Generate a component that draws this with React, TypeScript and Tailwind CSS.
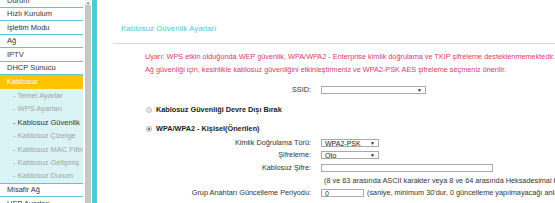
import React from 'react';

const font = { fontFamily: '"Liberation Sans", Arial, sans-serif' };

const mainTop = ['Durum', 'Hızlı Kurulum', 'İşletim Modu', 'Ağ', 'IPTV', 'DHCP Sunucu'];
const subItems = [
    'Temel Ayarlar',
    'WPS Ayarları',
    'Kablosuz Güvenlik',
    'Kablosuz Çizelge',
    'Kablosuz MAC Filtre',
    'Kablosuz Gelişmiş',
    'Kablosuz Durum',
];
const mainBottom = ['Misafir Ağ', 'USB Ayarları'];

const Select: React.FC<{ value?: string; className: string }> = ({ value = '', className }) => (
    <div className={`flex items-center justify-between h-[8px] border border-[#a9a9a9] bg-white pl-[3px] pr-[3px] ${className}`}>
        <span className="text-[7px] leading-none text-[#222]">{value}</span>
        <span className="text-[5px] leading-none text-[#222]">▼</span>
    </div>
);

const Row: React.FC<{ label?: string; className?: string; children?: React.ReactNode }> = ({ label, className = '', children }) => (
    <div className={`flex items-center h-[12px] ${className}`}>
        <div className="w-[166px] shrink-0 text-right text-[#333]">{label}</div>
        <div className="flex items-center gap-[3px] ml-[10px] whitespace-nowrap">{children}</div>
    </div>
);

export default function App() {
    return (
        <div className="flex h-[203px] w-[555px] overflow-hidden bg-white text-[7.5px]" style={font}>
            {/* Sidebar menu */}
            <div className="w-[83px] shrink-0">
                <div className="-mt-[6px]">
                    {mainTop.map((m) => (
                        <div key={m} className="h-[13.5px] flex items-center pl-[7px] text-[#333] border-b border-[#56c9d6] whitespace-nowrap">
                            {m}
                        </div>
                    ))}
                    <div className="h-[14px] flex items-center pl-[7px] bg-[#ffc300] text-white">Kablosuz</div>
                    <div className="bg-[#daf3f5] border-b border-[#56c9d6]">
                        {subItems.map((s) => (
                            <div
                                key={s}
                                className={`h-[13.4px] flex items-center pl-[13px] whitespace-nowrap overflow-hidden ${
                                    s === 'Kablosuz Güvenlik' ? 'text-[#333]' : 'text-[#a3a3a3]'
                                }`}
                            >
                                - {s}
                            </div>
                        ))}
                    </div>
                    {mainBottom.map((m) => (
                        <div key={m} className="h-[13.5px] flex items-center pl-[7px] text-[#333] border-b border-[#56c9d6] whitespace-nowrap">
                            {m}
                        </div>
                    ))}
                </div>
            </div>

            {/* Scrollbar */}
            <div className="ml-[2px] w-[6px] shrink-0 flex flex-col bg-[#c6c6c6]">
                <div className="h-[5px] bg-[#f1f1f1] flex items-center justify-center text-[4px] leading-none text-[#777]">▲</div>
            </div>
            <div className="ml-[1px] w-[5px] shrink-0 bg-[#4ccad6]" />

            {/* Content */}
            <div className="flex-1 flex flex-col min-w-0 whitespace-nowrap text-[7.3px]">
                <div className="mt-[23px] ml-[24px] h-[12px] leading-[12px] text-[8px] text-[#4ec8d6]">Kablosuz Güvenlik Ayarları</div>
                <div className="mt-[8px] ml-[16px] h-px bg-[#dcdcdc]" />

                <div className="mt-[6px] ml-[48px] leading-[13px] text-[#d8386b]">
                    <div>Uyarı: WPS etkin olduğunda WEP güvenlik, WPA/WPA2 - Enterprise kimlik doğrulama ve TKIP şifreleme desteklenmemektedir.</div>
                    <div>Ağ güvenliği için, kesinlikle kablosuz güvenliğini etkinleştirmeniz ve WPA2-PSK AES şifreleme seçmeniz önerilir.</div>
                </div>

                <div className="ml-[48px] flex flex-col">
                    <Row label="SSID:" className="mt-[8px]">
                        <Select className="w-[105px]" />
                    </Row>

                    <div className="mt-[8px] h-[12px] flex items-center gap-[4px] pl-[1px] font-bold text-[#222]">
                        <span className="w-[6px] h-[6px] rounded-full border border-[#c4c4c4] bg-[#e6e6e6]" />
                        Kablosuz Güvenliği Devre Dışı Bırak
                    </div>
                    <div className="mt-[7px] h-[12px] flex items-center gap-[4px] pl-[1px] font-bold text-[#222]">
                        <span className="w-[6px] h-[6px] rounded-full border border-[#b8b8b8] bg-[#e6e6e6] flex items-center justify-center">
                            <span className="w-[2px] h-[2px] rounded-full bg-[#555]" />
                        </span>
                        WPA/WPA2 - Kişisel(Önerilen)
                    </div>

                    <Row label="Kimlik Doğrulama Türü:" className="mt-[2px]">
                        <Select value="WPA2-PSK" className="w-[58px]" />
                    </Row>
                    <Row label="Şifreleme:">
                        <Select value="Oto" className="w-[58px]" />
                    </Row>
                    <Row label="Kablosuz Şifre:" className="mt-[1px]">
                        <div className="w-[172px] h-[8px] border border-[#a9a9a9] bg-white" />
                    </Row>
                    <Row className="mt-[1px]">
                        <span className="ml-[3px] text-[#333]">(8 ve 63 arasında ASCII karakter veya 8 ve 64 arasında Heksadesimal karakter giriniz.)</span>
                    </Row>
                    <Row label="Grup Anahtarı Güncelleme Periyodu:">
                        <div className="w-[43px] h-[8px] border border-[#a9a9a9] bg-white flex items-center pl-[3px] text-[7px] leading-none text-[#333]">0</div>
                        <span className="text-[#333]">(saniye, minimum 30'dur, 0 güncelleme yapılmayacağı anlamına gelir.)</span>
                    </Row>
                </div>
            </div>
        </div>
    );
}
